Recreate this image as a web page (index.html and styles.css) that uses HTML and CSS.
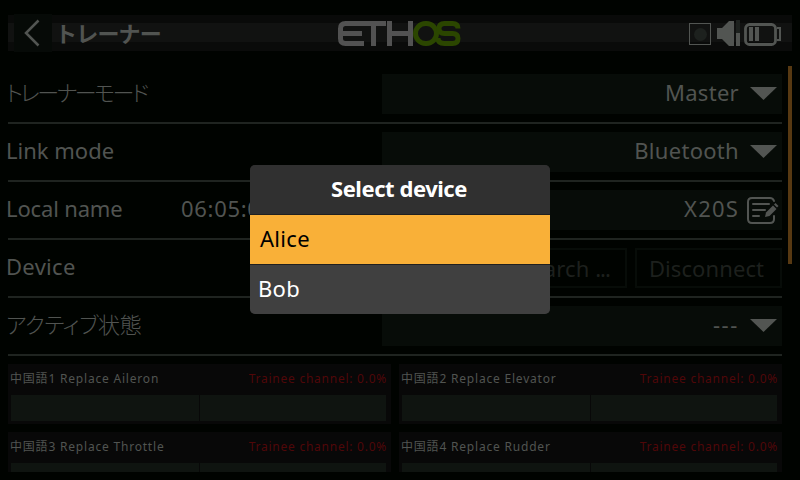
FILE: index.html
```
<!DOCTYPE html>
<html lang="ja">
<head>
<meta charset="utf-8">
<title>トレーナー</title>
<link rel="stylesheet" href="styles.css">
</head>
<body>
<div class="screen">
  <header class="topbar">
    <button class="back" aria-label="Back"><svg width="38" height="38" viewBox="0 0 38 38"><path d="M24.500 6.500L12 19l12.500 12.500" fill="none" stroke="#525552" stroke-width="2.500"/></svg></button>
    <h1 class="title">トレーナー</h1>
    <svg class="logo" width="124" height="28" viewBox="0 0 124 28" fill="none" stroke-width="5">
      <g stroke="#525252"><path d="M26 3.500H7.500Q2.500 3.500 2.500 8.500V18.500Q2.500 23.500 7.500 23.500H26M3 13.500H24M24 3.500H48M35.500 3V26M51.500 1V26M72.500 1V26M51.500 13.500H72.500"/></g>
      <g stroke="#2b4600"><rect x="77.500" y="3.500" width="21" height="20" rx="10"/><path d="M120 8.500Q120 3.500 114.500 3.500H106.500Q101 3.500 101 8.500T106.500 13.500H114.500Q120 13.500 120 18.500T114.500 23.500H106.500Q100 23.500 100 18"/></g>
    </svg>
    <div class="status">
      <svg width="94" height="28" viewBox="0 0 94 28">
        <rect x="1.500" y="4.500" width="21" height="21" fill="none" stroke="#525552"/><circle cx="12.500" cy="15.500" r="6.500" fill="#1d211e"/>
        <path d="M29 9h5l7-7h5v25h-5l-7-7h-5z" fill="#525552"/><path d="M48 1h4v13h-4z" fill="#1d211e"/><path d="M48 14h4v13h-4z" fill="#525552"/>
        <rect x="57.500" y="5.500" width="30" height="20" rx="4" fill="none" stroke="#525552" stroke-width="2.800"/><path d="M89 9h3v12h-3" fill="none" stroke="#525552" stroke-width="2"/><path d="M61 8h4v14h-4zM67 8h4v14h-4z" fill="#525552"/>
      </svg>
    </div>
  </header>
  <main class="content">
    <div class="row"><span class="label thin l-mode">トレーナーモード</span><div class="field"><span>Master</span><i class="arrow"></i></div></div>
    <div class="row"><span class="label l-link">Link mode</span><div class="field"><span>Bluetooth</span><i class="arrow"></i></div></div>
    <div class="row"><span class="label l-local">Local name</span><span class="address">06:05:04:03</span><div class="field named"><span>X20S</span>
      <svg class="edit" width="32" height="28" viewBox="0 0 32 28" fill="none" stroke="#525552" stroke-width="2" stroke-linecap="round"><path d="M27 5Q26 2 23 2H5Q1 2 1 6V23Q1 27 5 27H23Q27 27 27 23V20"/><path d="M6 8H22M6 14H18M6 20H12"/><path d="M18 21l1-4.500 7-7 3.500 3.500-7 7z" fill="#525552" stroke="none"/><path d="M27 8.500l1.500-1.500 3 3L30 11.500z" fill="#525552" stroke="none"/></svg></div></div>
    <div class="row"><span class="label">Device</span><div class="actions"><button class="action search">Search <span class="dots">...</span></button><button class="action">Disconnect</button></div></div>
    <div class="row"><span class="label thin l-active">アクティブ状態</span><div class="field"><span class="dashes">---</span><i class="arrow"></i></div></div>
    <section class="channels">
      <article class="card"><div class="caption"><span>中国語1 Replace Aileron</span><span class="alert">Trainee channel: 0.0%</span></div><div class="bar"><i></i><i></i></div></article>
      <article class="card"><div class="caption"><span>中国語2 Replace Elevator</span><span class="alert">Trainee channel: 0.0%</span></div><div class="bar"><i></i><i></i></div></article>
      <article class="card"><div class="caption"><span>中国語3 Replace Throttle</span><span class="alert">Trainee channel: 0.0%</span></div><div class="bar"><i></i><i></i></div></article>
      <article class="card"><div class="caption"><span>中国語4 Replace Rudder</span><span class="alert">Trainee channel: 0.0%</span></div><div class="bar"><i></i><i></i></div></article>
    </section>
  </main>
  <div class="scrollbar"></div>
  <div class="dialog" role="dialog">
    <h2>Select device</h2>
    <div class="option selected">Alice</div>
    <div class="option">Bob</div>
  </div>
</div>
</body>
</html>
```
FILE: styles.css
```
* { box-sizing: border-box; }
body { margin: 0; background: #000300; font-family: "Noto Sans", "Noto Sans CJK JP", sans-serif; color: #515451; }
button { font: inherit; color: inherit; border: 0; padding: 0; }
.screen { position: relative; width: 800px; height: 480px; overflow: hidden; padding: 15px 18px 8px 8px; font-size: 22px; letter-spacing: 0.3px; }
.topbar { position: relative; display: flex; align-items: center; width: 784px; height: 36px; background: linear-gradient(#090a09 0 8px, #111211 8px 27px, #0a0b0a 27px); }
.back { display: block; flex: none; width: 38px; height: 38px; margin-left: 6px; background: #060a07; }
.back svg { display: block; }
.title { margin: 0 0 0 3px; font-size: 22px; line-height: 36px; font-weight: 700; letter-spacing: -0.8px; white-space: nowrap; }
.logo { position: absolute; left: 330px; top: 5px; }
.status { margin-left: auto; margin-right: 10px; height: 28px; }
.status svg { display: block; }
.content { height: 406px; margin: 15px 0 0 -8px; padding-left: 8px; overflow: hidden; }
.row { display: flex; align-items: center; height: 58px; border-bottom: 2px solid #1f2420; white-space: nowrap; line-height: 30px; }
.label, .address, .field span { padding-bottom: 5px; }
.label { margin-left: -2px; }
.l-link { letter-spacing: 0; }
.l-local { width: 117px; letter-spacing: -0.15px; }
.thin { font-family: "Noto Sans CJK JP", sans-serif; font-weight: 300; padding-bottom: 7px; font-feature-settings: "palt"; }
.l-mode { margin-left: -2px; letter-spacing: -2.5px; }
.l-active { letter-spacing: -0.4px; }
.address { margin-left: 58px; width: 190px; letter-spacing: 0.7px; }
.field { display: flex; align-items: center; justify-content: flex-end; gap: 11px; width: 400px; height: 40px; flex: none; margin-left: auto; padding-right: 5px; background: #070c08; }
.named { gap: 8px; padding-right: 3px; letter-spacing: 1.2px; z-index: 1; }
.arrow { width: 27px; height: 13px; margin-bottom: 1px; background: #525552; clip-path: polygon(0 0, 100% 0, 50% 100%); }
.dashes { letter-spacing: 1.6px; }
.actions { display: flex; gap: 8px; margin-left: auto; }
.action { width: 147px; height: 40px; border: 2px solid #070c08; background: none; color: #1d201d; letter-spacing: 0.1px; line-height: 36px; padding-right: 4px; }
.search { padding: 0 0 0 22px; }
.dots { letter-spacing: -1px; }
.channels { display: grid; grid-template-columns: 383px 383px; gap: 8px; padding-top: 8px; }
.card { height: 60px; padding: 0 5px 3px 3px; background: #080808; }
.caption { display: flex; justify-content: space-between; height: 31px; line-height: 29px; font-size: 12px; letter-spacing: 0.8px; white-space: nowrap; margin: 0 -1px; }
.alert { color: #500708; letter-spacing: 0.75px; }
.bar { display: grid; grid-template-columns: 188px 1fr; gap: 1px; height: 26px; }
.bar i { background: #0f1410; }
.scrollbar { position: absolute; left: 788px; top: 66px; width: 4px; height: 198px; background: #573912; }
.dialog { position: absolute; z-index: 2; left: 250px; top: 165px; width: 300px; height: 149px; display: grid; grid-template-rows: 49px 49px 49px; gap: 1px; border-radius: 5px; overflow: hidden; background: #202020; color: #fff; }
.dialog h2 { margin: 0; padding-right: 2px; text-align: center; background: #303030; font-size: 22px; line-height: 47px; letter-spacing: -0.45px; }
.option { padding-left: 8px; background: #404040; line-height: 46px; }
.selected { padding-left: 10px; background: #f9b038; color: #000; }
```
